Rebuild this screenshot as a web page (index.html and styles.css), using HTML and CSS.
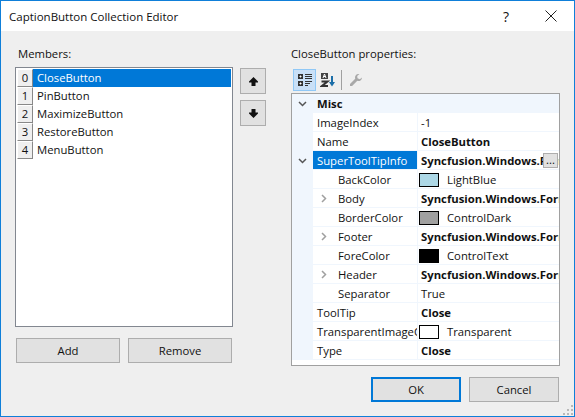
FILE: index.html
```html
<!DOCTYPE html>
<html lang="en">
<head>
    <meta charset="UTF-8">
    <title>CaptionButton Collection Editor</title>
    <link rel="stylesheet" href="styles.css">
</head>
<body>
    <div class="dialog">
        <div class="titlebar">
            <span class="title">CaptionButton Collection Editor</span>
            <span class="help">?</span>
            <svg class="close" width="12" height="12" viewBox="0 0 12 12"><path d="M.5.5l11 11M11.500.5l-11 11" stroke="#222" fill="none"/></svg>
        </div>
        <div class="content">
            <!-- Members side -->
            <div class="members">
                <div class="label">Members:</div>
                <div class="members-row">
                    <div class="listbox">
                        <div class="item selected"><span class="index">0</span><span class="item-name">CloseButton</span></div>
                        <div class="item"><span class="index">1</span><span class="item-name">PinButton</span></div>
                        <div class="item"><span class="index">2</span><span class="item-name">MaximizeButton</span></div>
                        <div class="item"><span class="index">3</span><span class="item-name">RestoreButton</span></div>
                        <div class="item"><span class="index">4</span><span class="item-name">MenuButton</span></div>
                    </div>
                    <div class="move-buttons">
                        <button class="btn move"><svg width="11" height="11" viewBox="0 0 11 11"><path d="M5.500 1L10 5.500v1H7.500V10h-4V6.500H1v-1z" fill="#111"/></svg></button>
                        <button class="btn move"><svg width="11" height="11" viewBox="0 0 11 11"><path d="M5.500 10L10 5.500v-1H7.500V1h-4v3.500H1v1z" fill="#111"/></svg></button>
                    </div>
                </div>
                <div class="add-remove">
                    <button class="btn wide">Add</button>
                    <button class="btn wide">Remove</button>
                </div>
            </div>

            <!-- Properties side -->
            <div class="properties">
                <div class="label">CloseButton properties:</div>
                <div class="toolbar">
                    <span class="tool active">
                        <svg width="16" height="16" viewBox="0 0 16 16">
                            <path d="M1 2h5v5H1zM1 9h5v5H1z" fill="#333"/>
                            <path d="M2.500 4.500h2M3.500 3.500v2M2.500 11.500h2M3.500 10.500v2" stroke="#fff" fill="none"/>
                            <path d="M8 2.500h7M8 4.500h7M8 6.500h7M8 9.500h7M8 11.500h5M8 13.500h3" stroke="#333" fill="none"/>
                        </svg>
                    </span>
                    <span class="tool narrow">
                        <svg width="16" height="16" viewBox="0 0 16 16">
                            <path d="M1 1h7v6H1z" fill="#444"/>
                            <path d="M3 6l1.500-4L6 6M3.500 4.500h2" stroke="#fff" fill="none"/>
                            <path d="M1.500 9.500h6L2 14h6" stroke="#333" stroke-width="2" fill="none"/>
                            <path d="M12 4v9" stroke="#1b6ea8" stroke-width="2" fill="none"/>
                            <path d="M9 10l3 4.500 3-4.500z" fill="#1b6ea8"/>
                        </svg>
                    </span>
                    <span class="tool-sep"></span>
                    <span class="tool">
                        <svg width="14" height="14" viewBox="0 0 14 14"><path d="M9.500 1a3.500 3.500 0 0 0-3.300 4.700L1 10.900V13h2.100l5.200-5.200A3.500 3.500 0 0 0 13 4.500l-2.200 1.700-2.300-.9-.3-2.300L10.500 1z" fill="#a8a8a8"/></svg>
                    </span>
                </div>
                <div class="grid">
                    <div class="row category"><span class="gutter"><svg class="chev" width="9" height="6" viewBox="0 0 9 6"><path d="M1 1l3.500 3.500L8 1" stroke="#555" stroke-width="1.500" fill="none"/></svg></span><span class="cat-name">Misc</span></div>
                    <div class="row"><span class="gutter"></span><span class="name">ImageIndex</span><span class="value">-1</span></div>
                    <div class="row"><span class="gutter"></span><span class="name">Name</span><span class="value bold">CloseButton</span></div>
                    <div class="row picked"><span class="gutter"><svg class="chev" width="9" height="6" viewBox="0 0 9 6"><path d="M1 1l3.500 3.500L8 1" stroke="#555" stroke-width="1.500" fill="none"/></svg></span><span class="name">SuperToolTipInfo</span><span class="value bold">Syncfusion.Windows.Forms.Tools.SuperToolTipInfo<span class="ellipsis">...</span></span></div>
                    <div class="row"><span class="gutter"></span><span class="name sub">BackColor</span><span class="value"><i class="swatch light-blue"></i>LightBlue</span></div>
                    <div class="row"><span class="gutter"></span><span class="name sub"><svg class="expand" width="6" height="9" viewBox="0 0 6 9"><path d="M1 1l3.500 3.500L1 8" stroke="#a0a0a0" stroke-width="1.500" fill="none"/></svg>Body</span><span class="value bold">Syncfusion.Windows.Forms.Tools</span></div>
                    <div class="row"><span class="gutter"></span><span class="name sub">BorderColor</span><span class="value"><i class="swatch control-dark"></i>ControlDark</span></div>
                    <div class="row"><span class="gutter"></span><span class="name sub"><svg class="expand" width="6" height="9" viewBox="0 0 6 9"><path d="M1 1l3.500 3.500L1 8" stroke="#a0a0a0" stroke-width="1.500" fill="none"/></svg>Footer</span><span class="value bold">Syncfusion.Windows.Forms.Tools</span></div>
                    <div class="row"><span class="gutter"></span><span class="name sub">ForeColor</span><span class="value"><i class="swatch control-text"></i>ControlText</span></div>
                    <div class="row"><span class="gutter"></span><span class="name sub"><svg class="expand" width="6" height="9" viewBox="0 0 6 9"><path d="M1 1l3.500 3.500L1 8" stroke="#a0a0a0" stroke-width="1.500" fill="none"/></svg>Header</span><span class="value bold">Syncfusion.Windows.Forms.Tools</span></div>
                    <div class="row"><span class="gutter"></span><span class="name sub">Separator</span><span class="value">True</span></div>
                    <div class="row"><span class="gutter"></span><span class="name">ToolTip</span><span class="value bold">Close</span></div>
                    <div class="row"><span class="gutter"></span><span class="name">TransparentImageColor</span><span class="value"><i class="swatch transparent"></i>Transparent</span></div>
                    <div class="row"><span class="gutter"></span><span class="name">Type</span><span class="value bold">Close</span></div>
                </div>
                <div class="dialog-buttons">
                    <button class="btn dialog-btn default">OK</button>
                    <button class="btn dialog-btn">Cancel</button>
                </div>
            </div>
        </div>
        <svg class="grip" width="11" height="11" viewBox="0 0 11 11"><path d="M8 0h2v2H8zM4 4h2v2H4zM8 4h2v2H8zM0 8h2v2H0zM4 8h2v2H4zM8 8h2v2H8z" fill="#b8b8b8"/></svg>
    </div>
</body>
</html>
```

FILE: styles.css
```css
* {
    box-sizing: border-box;
}

body {
    margin: 0;
    font-family: "Open Sans", "Liberation Sans", sans-serif;
    font-size: 11.3px;
    color: #111;
}

.dialog {
    position: relative;
    width: 575px;
    height: 417px;
    border: 1px solid #0f7fd9;
    background-color: #efefef;
    overflow: hidden;
}

.titlebar {
    display: flex;
    align-items: center;
    height: 30px;
    padding-left: 8px;
    background-color: #fff;
}

.title {
    flex: 1;
    font-size: 11.5px;
}

.help {
    width: 12px;
    margin-right: 30px;
    font-size: 14px;
}

.close {
    margin-right: 17px;
}

.content {
    display: flex;
    padding-top: 15px;
}

.label {
    height: 21px;
    line-height: 16px;
}

/* Left side */
.members {
    width: 275px;
    margin-left: 14px;
}

.members .label {
    padding-left: 3px;
}

.members-row {
    display: flex;
    gap: 7px;
}

.listbox {
    width: 218px;
    height: 260px;
    padding: 1px;
    border: 1px solid #828790;
    background-color: #fff;
}

.item {
    display: flex;
    height: 18px;
    line-height: 18px;
}

.index {
    width: 16px;
    text-align: center;
    background-color: #efefef;
    border: 1px solid;
    border-color: #fff #888 #888 #fff;
    line-height: 15px;
}

.item-name {
    flex: 1;
    padding-left: 4px;
}

.item.selected .item-name {
    background-color: #0078d7;
    color: #fff;
}

.move-buttons {
    display: flex;
    flex-direction: column;
    gap: 6px;
    padding-top: 1px;
}

.btn {
    padding: 0;
    border: 1px solid #adadad;
    background-color: #e1e1e1;
    color: #111;
    font: inherit;
}

.move {
    display: flex;
    align-items: center;
    justify-content: center;
    width: 26px;
    height: 26px;
}

.add-remove {
    display: flex;
    gap: 8px;
    margin-top: 11px;
    padding-left: 1px;
}

.wide {
    width: 104px;
    height: 25px;
}

/* Right side */
.properties {
    width: 269px;
    margin-left: 1px;
}

.toolbar {
    display: flex;
    align-items: center;
    gap: 2px;
    height: 26px;
    padding: 2px 0 2px 2px;
}

.tool {
    display: flex;
    align-items: center;
    justify-content: center;
    width: 23px;
    height: 22px;
}

.tool.narrow {
    width: 20px;
}

.tool.active {
    background-color: #c9e0f7;
    border: 1px solid #90c8f6;
}

.tool-sep {
    width: 1px;
    height: 20px;
    margin-left: 1px;
    background-color: #a0a0a0;
}

.grid {
    width: 269px;
    height: 273px;
    border: 1px solid #a0a0a0;
    background-color: #fff;
    overflow: hidden;
}

.row {
    display: flex;
    height: 19px;
    line-height: 19px;
    white-space: nowrap;
}

.gutter {
    display: flex;
    align-items: center;
    justify-content: center;
    flex: none;
    width: 21px;
    background-color: #f0f6fd;
}

.row.category {
    background-color: #f0f6fd;
}

.cat-name {
    font-weight: bold;
    padding-left: 4px;
}

.name {
    flex: none;
    width: 104px;
    padding-left: 4px;
    border-bottom: 1px solid #f0f6fd;
    overflow: hidden;
}

.name.sub {
    position: relative;
    padding-left: 25px;
}

.expand {
    position: absolute;
    left: 8px;
    top: 5px;
}

.value {
    position: relative;
    display: flex;
    align-items: center;
    flex: 1;
    min-width: 0;
    padding-left: 3px;
    border-left: 1px solid #f0f6fd;
    border-bottom: 1px solid #f0f6fd;
    overflow: hidden;
}

.bold {
    font-weight: bold;
}

.row.picked .name {
    background-color: #0078d7;
    color: #fff;
}

.ellipsis {
    position: absolute;
    right: 1px;
    top: 2px;
    width: 15px;
    height: 15px;
    line-height: 11px;
    text-align: center;
    font-weight: normal;
    background-color: #e1e1e1;
    border: 1px solid #adadad;
}

.swatch {
    flex: none;
    width: 20px;
    height: 14px;
    margin-left: -2px;
    margin-right: 8px;
    margin-top: 2px;
    border: 1px solid #000;
}

.light-blue {
    background-color: #add8e6;
}

.control-dark {
    background-color: #a0a0a0;
}

.control-text {
    background-color: #000;
}

.transparent {
    background-color: #fff;
}

.dialog-buttons {
    display: flex;
    justify-content: flex-end;
    gap: 8px;
    margin-top: 11px;
    padding-right: 1px;
}

.dialog-btn {
    width: 90px;
    height: 25px;
}

.default {
    border: 2px solid #0078d7;
}

.grip {
    position: absolute;
    right: 0;
    bottom: 0;
}
```
